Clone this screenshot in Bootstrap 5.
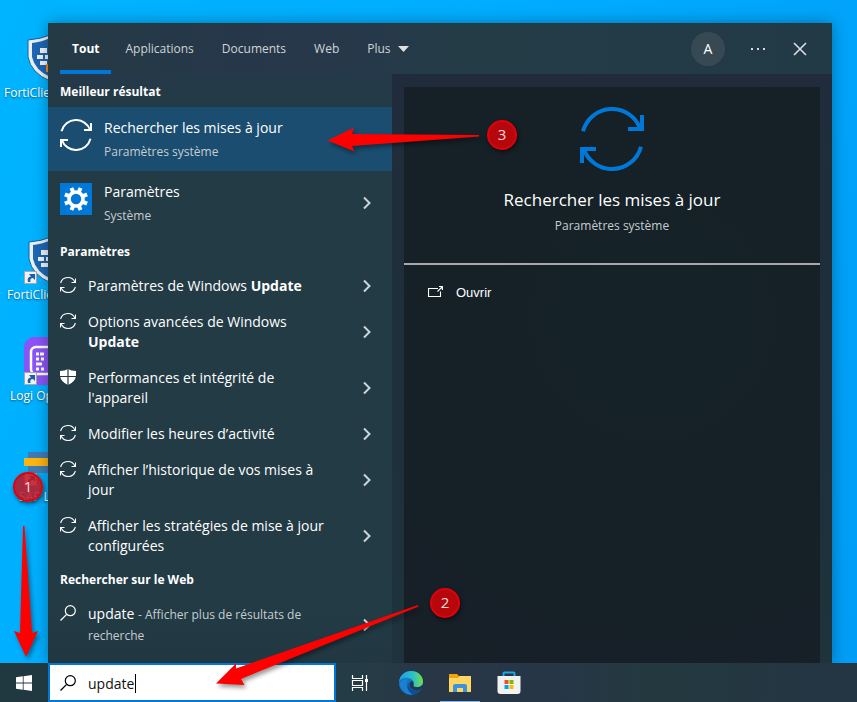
<!DOCTYPE html>
<html lang="fr">
<head>
<meta charset="utf-8">
<meta name="viewport" content="width=device-width, initial-scale=1">
<title>Recherche Windows</title>
<link href="https://cdn.jsdelivr.net/npm/bootstrap@5.3.0/dist/css/bootstrap.min.css" rel="stylesheet">
<style>
body{font-family:"Open Sans","Noto Sans",sans-serif;font-size:14px;line-height:20px;color:#fff;background:#00aeff}
a,a:hover{color:inherit;text-decoration:none}
.desktop{background:linear-gradient(115deg,#00b4ff 0%,#00acff 45%,#009df6 100%);min-height:0}
.shortcut{position:absolute;font-size:12px;line-height:16px;white-space:nowrap;text-shadow:0 1px 2px #00000080}
.shortcut svg{display:block;margin-left:24px}
.sc-1{top:34px}.sc-2{top:236px}.sc-3{top:337px}.sc-4{top:438px}
.sc-label{display:block;margin-top:3px}
.sc-1 .sc-label{padding-left:4px}.sc-2 .sc-label{padding-left:7px}.sc-3 .sc-label{padding-left:10px}.sc-4 .sc-label{padding-left:19px}
.search-panel{margin:23px 25px 0 48px;background:#233b45;box-shadow:0 0 14px #00000059;min-height:0}
.tabs-bar{height:51px;background:linear-gradient(90deg,#243a44 0%,#26374a 25%,#26394a 42%,#243c46 52%,#223a46 100%);color:#cfd5d8;font-size:12px;padding-left:12px}
.tab-link{padding:5px 14px 0;display:flex;align-items:center;gap:7px;border:0;border-bottom:4px solid transparent;background:none;color:inherit}
.tab-link.is-on{color:#fff;font-weight:700;border-color:#0078d7;padding-left:12px;padding-right:12px}
.icon-btn{border:0;background:none;padding:0;color:inherit;display:flex;align-items:center;justify-content:center}
.avatar{width:34px;height:34px;border-radius:50%;background:#374a54;color:#fff;font-size:14px}
.results{flex:0 0 344px;padding-top:1px;background:linear-gradient(180deg,#24394a 0,#233b45 40px,#233b45 90%,#213842 100%)}
.group-title{font-size:12px;font-weight:700;line-height:30px;padding:2px 0 0 12px;margin:0}
.result{display:flex;padding:9px 20px 7px 12px;min-height:36px}
.result.big{height:64px;padding-top:11px;padding-bottom:11px}
.result.chosen{background:#1a4d70}
.result .ico{flex:none;margin-right:12px}
.big .ico{margin-top:1px}
.result .txt{flex:1;padding-right:27px}
.result .chev{flex:none;align-self:center}
.minor{font-size:12px;color:#c6cdd1}
.big .minor{display:block;line-height:28px}
.preview-side{background:linear-gradient(180deg,#202c3b,#1f2f3b 50%,#1e333c);padding:13px 12px 0;min-width:0}
.preview{background:radial-gradient(circle at 60% 40%,#152227 0,#152127 50%,#181f28 100%)}
.hero{border-bottom:2px solid #a7a9ac;padding:20px 0 25px}
.hero h1{font-size:17px;line-height:26px;font-weight:400;margin:16px 0 0}
.hero p{line-height:24px;margin:1px 0 0}
.open-link{font-family:"Liberation Sans",Arial,sans-serif;font-size:13px;padding:18px 24px;gap:13px}
.taskbar{height:39px;background:linear-gradient(90deg,#203941 0,#243c45 42%,#283646 50%,#273647 64%,#23393f 76%,#243544 100%)}
.task-btn{width:48px}
.task-group{margin-left:3px;gap:1px}
.start-btn{width:48px}
.search-box{width:288px;border:2px solid #0078d7;background:#fff;color:#000;padding-left:10px;gap:12px;position:relative}
.search-box input{border:0;outline:0;padding:2px 0 0;width:200px;color:#111;background:none;font-size:14px}
.caret{position:absolute;left:85px;top:9px;width:1px;height:19px;background:#000}
.open-app{position:relative}
.open-app::after{content:"";position:absolute;left:4px;right:4px;bottom:0;height:1px;background:#76b9ed}
.notes{position:absolute;left:0;top:0;pointer-events:none;filter:drop-shadow(2px 3px 2px #00000066);z-index:3}
.step{position:absolute;z-index:4;width:30px;height:30px;border-radius:50%;border:2px solid #e3000b;background:#b6070d;color:#f7dcdc;font-size:15px;line-height:25px;text-align:center;box-shadow:1px 2px 4px #0008}
.step-1{left:13px;top:472px;background:#c41320d9}.step-2{left:430px;top:588px}.step-3{left:487px;top:120px}
</style>
<script src="https://cdn.jsdelivr.net/npm/bootstrap@5.3.0/dist/js/bootstrap.bundle.min.js"></script>
</head>
<body>
<svg class="d-none" aria-hidden="true">
<symbol id="sync" viewBox="0 0 64 64"><path d="M3 24.300A30 30 0 0 1 60.300 22M61 39.700A30 30 0 0 1 3.700 42M48 22H62V8M16 42H2V56" fill="none" stroke="currentColor" stroke-width="4"/></symbol>
<symbol id="sync-s" viewBox="0 0 16 16"><path d="M.6 6A7.600 7.600 0 0 1 15 5.500M15.400 10A7.600 7.600 0 0 1 1 10.500M11.500 5.500H15.500V1.500M4.500 10.500H.5V14.500" fill="none" stroke="currentColor" stroke-width="1.100"/></symbol>
<symbol id="chev" viewBox="0 0 10 14"><path d="M2 1.500L7.500 7L2 12.500" fill="none" stroke="#cdd5d9" stroke-width="2"/></symbol>
<symbol id="glass" viewBox="0 0 16 16"><path d="M.5 15.500L6.400 9.600" fill="none" stroke="currentColor" stroke-width="1.300"/><circle cx="10.300" cy="5.700" r="5" fill="none" stroke="currentColor" stroke-width="1.200"/></symbol>
<symbol id="forti" viewBox="0 0 48 48"><path d="M2 6Q15 5 24 1Q33 5 46 6V23Q43 39 24 47Q5 39 2 23Z" fill="#e9f1f7" stroke="#185f9f"/><path d="M6 9Q16 8 24 4Q32 8 42 9V23Q39 36 24 43Q9 36 6 23Z" fill="#1d67b4"/><path d="M14 14h7v5h-7zM23 14h7v5h-7zM11 21h6v4h-6zM19 21h6v4h-6zM14 27h7v4h-7zM23 27h7v4h-7z" fill="#f2f6fa"/></symbol>
<symbol id="lnk" viewBox="0 0 13 13"><path d="M.5.5h12v12H.5z" fill="#f2f2f2" stroke="#a8a8a8"/><path d="M4 11Q2.500 6 7 5.500L5 3H11V9L9 7Q5.500 7 6.500 11Z" fill="#1c5fae"/></symbol>
</svg>
<div class="d-flex flex-column vh-100 overflow-hidden position-relative">
<main class="desktop flex-fill d-flex flex-column position-relative overflow-hidden">
 <a href="#" class="shortcut sc-1"><svg width="48" height="48"><use href="#forti" x="2"/><path d="M22 30h3v8h-3z" fill="#ef8a2c"/></svg><span class="sc-label">FortiClient</span></a>
 <a href="#" class="shortcut sc-2"><svg width="48" height="48"><use href="#forti" x="3"/><use href="#lnk" y="35" width="13" height="13"/></svg><span class="sc-label">FortiClient</span></a>
 <a href="#" class="shortcut sc-3"><svg width="48" height="48"><rect width="48" height="48" rx="10" fill="#8a55f7"/><rect x="7" y="10" width="34" height="27" rx="5" fill="none" stroke="#fff" stroke-width="2.500"/><path d="M12 17h3M16 17h4M12 22h3M17 22h3M12 27h6M12 32h3M17 32h3" stroke="#fff" stroke-width="3"/><use href="#lnk" y="35" width="13" height="13"/></svg><span class="sc-label">Logi Options+</span></a>
 <a href="#" class="shortcut sc-4"><svg width="48" height="48"><path d="M4 14h40v6H4zM4 28h40v7H4z" fill="#3f7cb5"/><path d="M0 20h48v8H0z" fill="#ffb511"/><use href="#lnk" y="35" width="13" height="13"/></svg><span class="sc-label">SAP Logon</span></a>

 <section class="search-panel flex-fill d-flex flex-column position-relative">
  <header class="tabs-bar d-flex flex-shrink-0">
   <nav class="d-flex" aria-label="Filtres">
    <a class="tab-link is-on" href="#">Tout</a><a class="tab-link" href="#">Applications</a><a class="tab-link" href="#">Documents</a><a class="tab-link" href="#">Web</a>
    <button class="tab-link" type="button">Plus <svg width="11" height="6"><path d="M0 0H11L5.500 6Z" fill="#dde1e3"/></svg></button>
   </nav>
   <div class="d-flex align-items-center ms-auto">
    <button type="button" class="icon-btn avatar">A</button>
    <button type="button" class="icon-btn ms-4" aria-label="Options"><svg width="19" height="18"><path d="M2 8h2v2H2zM8 8h2v2H8zM14 8h2v2h-2z" fill="#d7dcdf"/></svg></button>
    <button type="button" class="icon-btn mx-4" aria-label="Fermer"><svg width="16" height="16"><path d="M2 2L14 14M14 2L2 14" stroke="#d9dee1" stroke-width="1.600"/></svg></button>
   </div>
  </header>
  <div class="d-flex flex-fill overflow-hidden">
   <div class="results overflow-hidden">
    <h2 class="group-title">Meilleur résultat</h2>
    <a href="#" class="result big chosen"><svg class="ico" width="32" height="32"><use href="#sync"/></svg><span class="txt pe-0">Rechercher les mises à jour<span class="minor">Paramètres système</span></span></a>
    <a href="#" class="result big"><svg class="ico" width="32" height="32" viewBox="0 0 32 32"><path d="M0 0h32v32H0z" fill="#0078d7"/><circle cx="16" cy="16" r="7" fill="none" stroke="#fff" stroke-width="3.600"/><path d="M16 4v4M16 24v4M4 16h4M24 16h4M7.500 7.500l3 3M21.500 21.500l3 3M24.500 7.500l-3 3M10.500 21.500l-3 3" stroke="#fff" stroke-width="4" transform="rotate(22.500 16 16)"/></svg><span class="txt">Paramètres<span class="minor">Système</span></span><svg class="chev" width="10" height="14"><use href="#chev"/></svg></a>
    <h2 class="group-title">Paramètres</h2>
    <a href="#" class="result"><svg class="ico" width="16" height="18"><use href="#sync-s" y="1" height="16"/></svg><span class="txt">Paramètres de Windows <b>Update</b></span><svg class="chev" width="10" height="14"><use href="#chev"/></svg></a>
    <a href="#" class="result"><svg class="ico" width="16" height="18"><use href="#sync-s" y="1" height="16"/></svg><span class="txt">Options avancées de Windows <b>Update</b></span><svg class="chev" width="10" height="14"><use href="#chev"/></svg></a>
    <a href="#" class="result"><svg class="ico" width="16" height="18"><path d="M8 1Q5 3 0 3V8Q1 14 8 17Q15 14 16 8V3Q11 3 8 1Z" fill="#fff"/><path d="M8 1V17M0 8.500H16" stroke="#233b45" stroke-width="1.200"/></svg><span class="txt">Performances et intégrité de l'appareil</span><svg class="chev" width="10" height="14"><use href="#chev"/></svg></a>
    <a href="#" class="result"><svg class="ico" width="16" height="18"><use href="#sync-s" y="1" height="16"/></svg><span class="txt">Modifier les heures d’activité</span><svg class="chev" width="10" height="14"><use href="#chev"/></svg></a>
    <a href="#" class="result"><svg class="ico" width="16" height="18"><use href="#sync-s" y="1" height="16"/></svg><span class="txt">Afficher l’historique de vos mises à jour</span><svg class="chev" width="10" height="14"><use href="#chev"/></svg></a>
    <a href="#" class="result"><svg class="ico" width="16" height="18"><use href="#sync-s" y="1" height="16"/></svg><span class="txt">Afficher les stratégies de mise à jour configurées</span><svg class="chev" width="10" height="14"><use href="#chev"/></svg></a>
    <h2 class="group-title">Rechercher sur le Web</h2>
    <a href="#" class="result"><svg class="ico" width="16" height="18"><use href="#glass" y="1" height="16"/></svg><span class="txt">update <span class="minor">- Afficher plus de résultats de recherche</span></span><svg class="chev" width="10" height="14"><use href="#chev"/></svg></a>
   </div>
   <div class="preview-side flex-fill d-flex">
    <div class="preview flex-fill">
     <div class="hero text-center"><svg width="64" height="64" color="#0078d7"><use href="#sync"/></svg><h1>Rechercher les mises à jour</h1><p class="minor">Paramètres système</p></div>
     <a href="#" class="open-link d-flex align-items-center"><svg width="15" height="16"><path d="M10 3.500H.5V11.500H12.500V6.500M9.500 6.500L14 2M11 1.500H14.400V5" fill="none" stroke="#fff" stroke-width="1.100"/></svg>Ouvrir</a>
    </div>
   </div>
  </div>
 </section>
</main>
<footer class="taskbar d-flex flex-shrink-0">
 <button type="button" class="icon-btn start-btn" aria-label="Démarrer"><svg width="16" height="16"><path d="M0 2.300L6.800 1.300V7.600H0ZM7.600 1.200L16 0V7.600H7.600ZM0 8.400H6.800V14.700L0 13.700ZM7.600 8.400H16V16L7.600 14.800Z" fill="#fff"/></svg></button>
 <label class="search-box d-flex align-items-center"><svg width="16" height="16"><use href="#glass"/></svg><input type="text" value="update" aria-label="Rechercher"><span class="caret"></span></label>
 <button type="button" class="icon-btn task-btn" aria-label="Vue des tâches"><svg width="18" height="16"><path d="M1.500 0V3.500H11.500V0M1.500 16V12.500H11.500V16M1.500 5.500H11.500V10.500H1.500ZM15.500 0V16" fill="none" stroke="#fff" stroke-width="1.200"/><path d="M14 4h3v3h-3z" fill="#fff"/></svg></button>
 <div class="task-group d-flex">
 <button type="button" class="icon-btn task-btn" aria-label="Edge"><svg width="24" height="24" viewBox="0 0 24 24"><defs><linearGradient id="e1"><stop stop-color="#1c9fe8"/><stop offset=".55" stop-color="#27bfc9"/><stop offset="1" stop-color="#72dd4c"/></linearGradient><linearGradient id="e2" x2="0" y2="1"><stop stop-color="#1287dd"/><stop offset="1" stop-color="#0c59a4"/></linearGradient></defs><circle cx="12" cy="12" r="12" fill="url(#e2)"/><path d="M0 11C1 4 6 0 12 0C19 0 24 5 24 10.500C24 14 21.500 16 18.500 16C15.500 16 14 15 14.500 14C16 11 13.500 8 9.500 7C5.500 6.300 1.500 7.500 0 11Z" fill="url(#e1)"/><path d="M9 8C6 13 8 20 14 23.800C7 24.500 1 19 .5 13C2 9 6 7 9 8Z" fill="#1b80d1"/><path d="M9.500 12C8.500 17 13 21 21.500 18.500Q19 22 15 23.600C10 22 7 17 9.500 12Z" fill="#0b4f98"/><path d="M14.500 14C13.500 15.500 16 16.600 19 16.200Q22 15.600 24.500 13.500Q24 17 21.500 18.500C16 20.500 9.500 17.500 10.500 12.500Q11 10.500 13 10Q15 12 14.500 14Z" fill="#273647"/></svg></button>
 <button type="button" class="icon-btn task-btn open-app" aria-label="Explorateur"><svg width="22" height="20" viewBox="0 0 22 20"><path d="M0 1h8l2 2h12v16H0z" fill="#f0a30a"/><path d="M0 5h9l2-2h11v16H0z" fill="#ffd566"/><path d="M4 19v-6q0-2 2-2h10q2 0 2 2v6h-4v-4H8v4z" fill="#3d92dc"/></svg></button>
 <button type="button" class="icon-btn task-btn" aria-label="Store"><svg width="24" height="24" viewBox="0 0 24 24"><path d="M6.500 6V2.500Q6.500 1.500 7.500 1.500H16.500Q17.500 1.500 17.500 2.500V6" fill="none" stroke="#1ba8ea" stroke-width="2"/><path d="M.5 5h23v15q0 3-3 3h-17q-3 0-3-3z" fill="#f2f2f2"/><path d="M7.500 9h4v4h-4z" fill="#f25022"/><path d="M12.500 9h4v4h-4z" fill="#7fba00"/><path d="M7.500 14h4v4h-4z" fill="#00a4ef"/><path d="M12.500 14h4v4h-4z" fill="#ffb900"/></svg></button>
 </div>
</footer>
<svg class="notes" width="540" height="702" aria-hidden="true"><path fill="red" d="M23 526H24.500L32 633L38 631L26 657L14 631L20 633ZM479 135V136.500L352 146L354.500 151.500L327.500 140.500L354 127.500L352 134ZM418 605L418.500 606.500L241 679L244.500 685L216 683.500L236 663.500V668.500Z"/></svg>
<span class="step step-1">1</span><span class="step step-2">2</span><span class="step step-3">3</span>
</div>
</body>
</html>
